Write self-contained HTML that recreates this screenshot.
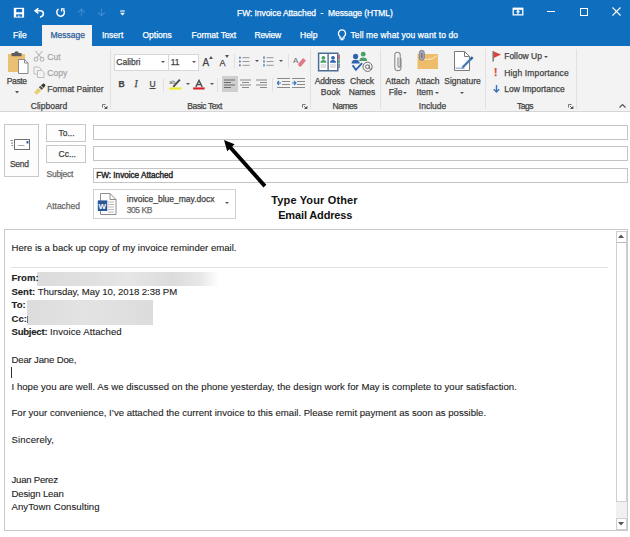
<!DOCTYPE html>
<html><head><meta charset="utf-8">
<style>
html,body{margin:0;padding:0;}
body{width:630px;height:537px;overflow:hidden;position:relative;background:#fff;font-family:"Liberation Sans",sans-serif;}
.a{position:absolute;}
.t{position:absolute;z-index:2;white-space:nowrap;line-height:1;-webkit-text-stroke:0.25px currentColor;}
#top{left:0;top:0;width:630px;height:46px;background:#106ebe;}
#rib{left:0;top:46px;width:630px;height:65px;background:#f3f3f3;border-bottom:1px solid #d6d6d6;}
.w{color:#fff;font-size:8.5px;}
.r{color:#444;font-size:8.5px;}
.sep{position:absolute;width:1px;background:#e1e1e1;}
.box{position:absolute;border:1px solid #c8c8c8;background:#fff;box-sizing:border-box;}
.btn{position:absolute;border:1px solid #c8c8c8;background:#fdfdfd;box-sizing:border-box;}
.b{color:#222;font-size:9.6px;-webkit-text-stroke:0.1px #222;}
</style></head><body>
<!-- title bar + tabs -->
<div id="top" class="a"></div>
<!-- QAT -->
<svg class="a" style="left:13px;top:7px" width="12" height="12" viewBox="0 0 12 12"><rect x="0.8" y="0.8" width="10.3" height="9.8" fill="#fff"/><rect x="3.2" y="1.9" width="5.9" height="3.4" rx="0.6" fill="#106ebe"/><rect x="3.2" y="7.3" width="5.9" height="2.4" fill="#106ebe"/><rect x="5" y="8.5" width="1.5" height="1.3" fill="#fff"/></svg>
<svg class="a" style="left:33px;top:6px" width="13" height="12" viewBox="0 0 13 12"><path d="M5.4 2.3L2.2 4.8l3.2 2.6" fill="none" stroke="#fff" stroke-width="1.6"/><path d="M2.4 4.8h5.2a2.9 2.9 0 0 1 0.9 5.6l-1.4 0.8" fill="none" stroke="#fff" stroke-width="1.6"/></svg>
<svg class="a" style="left:54px;top:7px" width="13" height="12" viewBox="0 0 13 12"><path d="M4.5 2.2A3.8 3.8 0 1 0 9.4 2.8" fill="none" stroke="#fff" stroke-width="1.5"/><path d="M10.6 1.9H7.6V4.6" fill="none" stroke="#fff" stroke-width="1.4"/></svg>
<svg class="a" style="left:77px;top:8px" width="9" height="9" viewBox="0 0 9 9"><path d="M4.5 8.5V1.2M1.3 4.5l3.2-3.3 3.2 3.3" fill="none" stroke="#3f88cf" stroke-width="1.15"/></svg>
<svg class="a" style="left:97px;top:8px" width="9" height="9" viewBox="0 0 9 9"><path d="M4.5 0.5V7.8M1.3 4.5l3.2 3.3 3.2-3.3" fill="none" stroke="#3f88cf" stroke-width="1.15"/></svg>
<svg class="a" style="left:119.5px;top:9.5px" width="5" height="6" viewBox="0 0 5 6"><path d="M0.2 1h4.6" stroke="#fff" stroke-width="1.1"/><path d="M0.1 2.8h4.8L2.5 5.6z" fill="#fff"/></svg>
<div class="t w" style="left:237px;top:8.6px;letter-spacing:-0.06px">FW: Invoice Attached&nbsp; -&nbsp; Message (HTML)</div>
<!-- window controls -->
<svg class="a" style="left:512px;top:7px" width="12" height="9" viewBox="0 0 12 9"><path d="M1.2 1.5h9.6v6.3H1.2z" fill="none" stroke="#fff" stroke-width="1.3"/><rect x="1" y="0.8" width="10" height="2" fill="#fff"/><path d="M6 2.6L3.8 5.2h4.4z" fill="#fff"/><rect x="5.4" y="5" width="1.2" height="2.5" fill="#fff"/></svg>
<div class="a" style="left:547px;top:11px;width:8px;height:1px;background:#fff"></div>
<div class="a" style="left:580px;top:8px;width:6px;height:6px;border:1.2px solid #fff"></div>
<svg class="a" style="left:612px;top:7px" width="9" height="9" viewBox="0 0 9 9"><path d="M0.5 0.5l8 8M8.5 0.5l-8 8" stroke="#fff" stroke-width="1.1"/></svg>
<!-- tabs -->
<div class="a" style="left:42px;top:25px;width:50px;height:21px;background:#f3f3f3"></div>
<div class="t w" style="left:13px;top:31.1px;">File</div>
<div class="t" style="left:50.5px;top:31.1px;font-size:8.5px;color:#2a5d9a">Message</div>
<div class="t w" style="left:102px;top:31.1px;">Insert</div>
<div class="t w" style="left:142.5px;top:31.1px;">Options</div>
<div class="t w" style="left:191.5px;top:31.1px;">Format Text</div>
<div class="t w" style="left:254.5px;top:31.1px;letter-spacing:-0.25px">Review</div>
<div class="t w" style="left:300px;top:31.1px;">Help</div>
<svg class="a" style="left:337px;top:29px" width="10" height="12" viewBox="0 0 10 12"><path d="M5 1a3.5 3.5 0 0 0-2 6.4V9h4V7.4A3.5 3.5 0 0 0 5 1zM3.5 10.5h3" fill="none" stroke="#fff" stroke-width="1.25"/></svg>
<div class="t w" style="left:350.5px;top:31.1px;letter-spacing:0.1px">Tell me what you want to do</div>

<!-- ribbon -->
<div id="rib" class="a"></div>
<!-- ===== Clipboard group ===== -->
<svg class="a" style="left:7px;top:50px" width="23" height="25" viewBox="0 0 23 25">
 <rect x="1" y="4" width="17" height="18" fill="#eac073"/>
 <path d="M4.5 3h10v3.2h-10z" fill="#5c5c5c"/><path d="M7.3 3a2.2 1.8 0 0 1 4.4 0z" fill="#5c5c5c"/>
 <path d="M11.5 9.5h6.2l3.3 3.3v10.7h-9.5z" fill="#fff" stroke="#8a8a8a" stroke-width="1"/>
 <path d="M17.5 9.5v3.5h3.5" fill="none" stroke="#8a8a8a" stroke-width="1"/>
</svg>
<div class="t r" style="left:6.7px;top:76.9px;letter-spacing:-0.35px">Paste</div>
<svg class="a" style="left:14.5px;top:91px" width="4" height="2.5" viewBox="0 0 4 2.5"><path d="M0 0h4L2 2.5z" fill="#555"/></svg>
<svg class="a" style="left:33px;top:50px" width="12" height="12" viewBox="0 0 12 12"><path d="M2.5 1l6 7M9.5 1l-6 7" stroke="#b5b5b5" stroke-width="1.1" fill="none"/><circle cx="3" cy="9.3" r="1.9" fill="none" stroke="#b5b5b5" stroke-width="1.1"/><circle cx="9" cy="9.3" r="1.9" fill="none" stroke="#b5b5b5" stroke-width="1.1"/></svg>
<div class="t r" style="left:47.3px;top:53.2px;color:#a8a8a8">Cut</div>
<svg class="a" style="left:33px;top:66px" width="12" height="12" viewBox="0 0 12 12"><path d="M1 1h5l2 2v5H1z" fill="none" stroke="#bdbdbd" stroke-width="1"/><path d="M4.5 4.5h4.5l2 2v5H4.5z" fill="#f3f3f3" stroke="#bdbdbd" stroke-width="1"/></svg>
<div class="t r" style="left:47.3px;top:68.8px;color:#a8a8a8">Copy</div>
<svg class="a" style="left:33px;top:83px" width="13" height="12" viewBox="0 0 13 12"><path d="M1 9.5l4.2-4.6 3 2.8-4.4 4z" fill="#e3cf72"/><path d="M5.8 4.3l1.6-1.5 2.8 2.6-1.5 1.6z" fill="#555"/><path d="M8 2.3l2.6-2 2 2-2 2.6z" fill="#333"/></svg>
<div class="t r" style="left:47.3px;top:85.3px;">Format Painter</div>
<div class="t r" style="left:30.8px;top:101.7px;">Clipboard</div>
<svg class="a" style="left:102px;top:104px" width="6" height="5" viewBox="0 0 6 5"><path d="M0.5 0.5h3M0.5 0.5v3" stroke="#777" stroke-width="1" fill="none"/><path d="M2 2l3 3M5 2.5V5H2.5z" stroke="#555" fill="#555" stroke-width="0.8"/></svg>
<div class="sep" style="left:110px;top:49px;height:60px"></div>

<!-- ===== Basic Text group ===== -->
<div class="box" style="left:114px;top:54px;width:55px;height:17px;border-color:#d8d8d8"></div>
<div class="box" style="left:168px;top:54px;width:31px;height:17px;border-color:#d8d8d8"></div>
<div class="t r" style="left:116.3px;top:58px;">Calibri</div>
<div class="t r" style="left:170.7px;top:58px;">11</div>
<svg class="a" style="left:161px;top:61px" width="4" height="2" viewBox="0 0 4 2"><path d="M0 0h4L2 2z" fill="#555"/></svg>
<svg class="a" style="left:192px;top:61px" width="4" height="2" viewBox="0 0 4 2"><path d="M0 0h4L2 2z" fill="#555"/></svg>
<div class="t" style="left:202.5px;top:57.5px;font-size:10px;color:#444">A</div>
<svg class="a" style="left:209px;top:56px" width="4" height="3" viewBox="0 0 4 3"><path d="M0 3h4L2 0z" fill="#555"/></svg>
<div class="t" style="left:219.5px;top:58.5px;font-size:9px;color:#444">A</div>
<svg class="a" style="left:225px;top:55px" width="4" height="3" viewBox="0 0 4 3"><path d="M0 0h4L2 3z" fill="#555"/></svg>
<div class="sep" style="left:234px;top:54px;height:14px;background:#e0e0e0"></div>
<svg class="a" style="left:239px;top:56px" width="11" height="11" viewBox="0 0 11 11"><g fill="#5a7fae"><rect x="0" y="0.8" width="1.8" height="1.8"/><rect x="0" y="4.6" width="1.8" height="1.8"/><rect x="0" y="8.4" width="1.8" height="1.8"/></g><g stroke="#8c8c8c" stroke-width="0.9"><path d="M3.5 1.7h7M3.5 5.5h7M3.5 9.3h7"/></g></svg>
<svg class="a" style="left:255px;top:60px" width="4" height="2" viewBox="0 0 4 2"><path d="M0 0h4L2 2z" fill="#555"/></svg>
<svg class="a" style="left:263px;top:56px" width="11" height="11" viewBox="0 0 11 11"><g fill="#5a7fae"><rect x="0.3" y="0.3" width="1.4" height="2.6"/><rect x="0.3" y="4.1" width="1.4" height="2.6"/><rect x="0.3" y="7.9" width="1.4" height="2.6"/></g><g stroke="#8c8c8c" stroke-width="0.9"><path d="M3.5 1.7h7M3.5 5.5h7M3.5 9.3h7"/></g></svg>
<svg class="a" style="left:279px;top:60px" width="4" height="2" viewBox="0 0 4 2"><path d="M0 0h4L2 2z" fill="#555"/></svg>
<div class="sep" style="left:288px;top:54px;height:14px;background:#e0e0e0"></div>
<svg class="a" style="left:293px;top:55px" width="13" height="12" viewBox="0 0 13 12"><text x="0" y="8" font-size="8" font-family="Liberation Sans" fill="#666">A</text><path d="M5 9l5-6 3 2.5-5 6H6z" fill="#e07a8a"/></svg>
<div class="t" style="left:118.5px;top:79.6px;font-size:8.5px;font-weight:bold;color:#444">B</div>
<div class="t" style="left:134.5px;top:79.6px;font-size:9.5px;font-style:italic;font-family:'Liberation Serif';color:#444">I</div>
<div class="t" style="left:149.5px;top:79.6px;font-size:8.5px;color:#444;text-decoration:underline">U</div>
<div class="sep" style="left:163px;top:78px;height:14px;background:#e0e0e0"></div>
<svg class="a" style="left:168px;top:78px" width="15" height="12" viewBox="0 0 15 12"><text x="1.2" y="5.6" font-size="5.5" font-family="Liberation Sans" fill="#555">ab</text><path d="M4.5 8.2l6.6-7.2 1.5 1.3-6.6 7.2z" fill="#505050"/><rect x="1.2" y="9.4" width="12" height="2.2" fill="#eee82a"/></svg>
<svg class="a" style="left:186px;top:83px" width="4" height="2" viewBox="0 0 4 2"><path d="M0 0h4L2 2z" fill="#555"/></svg>
<svg class="a" style="left:193px;top:79px" width="12" height="11" viewBox="0 0 12 11"><path d="M2.8 8L6 1.4 9.2 8M4 5.6h4" fill="none" stroke="#4a4a4a" stroke-width="1.4"/><rect x="0.2" y="8.4" width="11.4" height="2.1" fill="#d9202a"/></svg>
<svg class="a" style="left:210px;top:83px" width="4" height="2" viewBox="0 0 4 2"><path d="M0 0h4L2 2z" fill="#555"/></svg>
<div class="sep" style="left:217px;top:78px;height:14px;background:#e0e0e0"></div>
<div class="a" style="left:222px;top:76px;width:16px;height:16px;background:#cfcfcf"></div>
<svg class="a" style="left:224px;top:79px" width="11" height="10" viewBox="0 0 11 10"><path d="M0 1h11M0 3.5h7M0 6h11M0 8.5h7" stroke="#6a6a6a" stroke-width="1"/></svg>
<svg class="a" style="left:240px;top:79px" width="11" height="10" viewBox="0 0 11 10"><path d="M0 1h11M2 3.5h7M0 6h11M2 8.5h7" stroke="#8a8a8a" stroke-width="1"/></svg>
<svg class="a" style="left:256px;top:79px" width="11" height="10" viewBox="0 0 11 10"><path d="M0 1h11M4 3.5h7M0 6h11M4 8.5h7" stroke="#8a8a8a" stroke-width="1"/></svg>
<div class="sep" style="left:272px;top:78px;height:14px;background:#e0e0e0"></div>
<svg class="a" style="left:277px;top:78px" width="13" height="11" viewBox="0 0 13 11"><path d="M0 0.5h13M5 3.5h8M5 6.5h8M0 9.5h13" stroke="#8a8a8a" stroke-width="1"/><path d="M0 5h4M2 3l-2 2 2 2" stroke="#3a77c0" stroke-width="1.2" fill="none"/></svg>
<svg class="a" style="left:292px;top:78px" width="13" height="11" viewBox="0 0 13 11"><path d="M0 0.5h13M5 3.5h8M5 6.5h8M0 9.5h13" stroke="#8a8a8a" stroke-width="1"/><path d="M0 5h4M2 3l2 2-2 2" stroke="#3a77c0" stroke-width="1.2" fill="none"/></svg>
<div class="t r" style="left:187.3px;top:101.7px;letter-spacing:-0.4px">Basic Text</div>
<svg class="a" style="left:302px;top:104px" width="6" height="5" viewBox="0 0 6 5"><path d="M0.5 0.5h3M0.5 0.5v3" stroke="#777" stroke-width="1" fill="none"/><path d="M2 2l3 3M5 2.5V5H2.5z" stroke="#555" fill="#555" stroke-width="0.8"/></svg>
<div class="sep" style="left:310px;top:49px;height:60px"></div>

<!-- ===== Names group ===== -->
<svg class="a" style="left:317px;top:52px" width="24" height="20" viewBox="0 0 24 20">
 <path d="M1.6 1.2h9.6v17.6H1.6zM11.2 1.2h9.6v17.6h-9.6z" fill="#fff" stroke="#4d6c94" stroke-width="1.5"/>
 <path d="M11.2 1.5v17" stroke="#8aa0c0" stroke-width="0.8"/>
 <rect x="21.3" y="2.5" width="1.6" height="4.5" fill="#c85a5a"/><rect x="21.3" y="7.5" width="1.6" height="4" fill="#5aa07a"/><rect x="21.3" y="12" width="1.6" height="4" fill="#7a8aa0"/>
 <circle cx="6.4" cy="5.8" r="1.9" fill="#4a9e6c"/><path d="M3.4 10.8a3 2.8 0 0 1 6 0z" fill="#4a9e6c"/>
 <circle cx="16" cy="5.8" r="1.9" fill="#2f64ae"/><path d="M13 10.8a3 2.8 0 0 1 6 0z" fill="#2f64ae"/>
 <path d="M3.6 13h5.6M3.6 15h5.6M13.2 13h5.6M13.2 15h5.6" stroke="#b0b0b0" stroke-width="0.8"/>
</svg>
<svg class="a" style="left:351px;top:51px" width="24" height="22" viewBox="0 0 24 22">
 <circle cx="12.2" cy="3.2" r="2.4" fill="#4a9e6c"/><path d="M8.3 10a3.9 3.4 0 0 1 7.8 0z" fill="#4a9e6c"/>
 <circle cx="4.6" cy="5.4" r="2.6" fill="#2f64ae"/><path d="M0.5 12.5a4.1 3.8 0 0 1 8.2 0z" fill="#2f64ae"/>
 <path d="M1.6 14.2l3.3 4.6 6.2-6.6" stroke="#2f64ae" stroke-width="1.9" fill="none"/>
 <circle cx="16.6" cy="15.8" r="5.3" fill="#f3f3f3"/>
 <circle cx="16.6" cy="15.8" r="4.6" fill="none" stroke="#6e6e6e" stroke-width="1"/>
 <circle cx="16.4" cy="15.8" r="1.9" fill="none" stroke="#6e6e6e" stroke-width="1"/>
 <path d="M18.3 13.6v3.4a1.1 1.1 0 0 0 2.2 0" fill="none" stroke="#6e6e6e" stroke-width="0.9"/>
</svg>
<div class="t r" style="left:314.8px;top:77.3px;letter-spacing:-0.2px">Address</div>
<div class="t r" style="left:320.8px;top:88px;">Book</div>
<div class="t r" style="left:350px;top:77.3px;">Check</div>
<div class="t r" style="left:348.7px;top:88px;letter-spacing:-0.1px">Names</div>
<div class="t r" style="left:332.6px;top:101.7px;letter-spacing:-0.5px">Names</div>
<div class="sep" style="left:380px;top:49px;height:60px"></div>

<!-- ===== Include group ===== -->
<svg class="a" style="left:393px;top:51px" width="10" height="21" viewBox="0 0 10 21"><path d="M5 6.5V15a1.1 1.1 0 0 0 2.2 0V4a2.7 2.7 0 0 0-5.4 0V16.5a3.1 3.1 0 0 0 6.2 0V7" fill="none" stroke="#8a8a8a" stroke-width="1.1"/></svg>
<svg class="a" style="left:417px;top:49px" width="22" height="21" viewBox="0 0 22 21"><rect x="0.5" y="5" width="20.5" height="15" fill="#eebd6c"/><path d="M2 6.5q8.5 8 18 0" fill="none" stroke="#f8e0b0" stroke-width="1.1"/><rect x="2.3" y="1.3" width="5" height="10" rx="2.5" fill="#a8a8b8" stroke="#7a7a88" stroke-width="0.9"/><path d="M4.8 4v5" stroke="#555" stroke-width="0.9"/></svg>
<svg class="a" style="left:452px;top:50px" width="22" height="22" viewBox="0 0 22 22"><path d="M2.5 1.5h10l5 5v14h-15z" fill="#fff" stroke="#7a7a7a" stroke-width="1"/><path d="M12.5 1.5v5h5" fill="none" stroke="#7a7a7a" stroke-width="1"/><path d="M10.5 17.5l9.2-9.4" stroke="#4a78b2" stroke-width="2.4"/><path d="M19 8.8l1.6-1.6" stroke="#2f5d96" stroke-width="2.4"/><path d="M9.8 18.3l0.8-0.8" stroke="#9ab" stroke-width="1.4"/><path d="M3.5 18.2h9" stroke="#5a7fae" stroke-width="0.8"/></svg>
<div class="t r" style="left:385.6px;top:77px;">Attach</div>
<div class="t r" style="left:388.7px;top:88.3px;">File</div>
<svg class="a" style="left:403px;top:92px" width="4" height="2" viewBox="0 0 4 2"><path d="M0 0h4L2 2z" fill="#555"/></svg>
<div class="t r" style="left:415.5px;top:77px;">Attach</div>
<div class="t r" style="left:416.6px;top:88.3px;">Item</div>
<svg class="a" style="left:435px;top:92px" width="4" height="2" viewBox="0 0 4 2"><path d="M0 0h4L2 2z" fill="#555"/></svg>
<div class="t r" style="left:444.3px;top:77px;">Signature</div>
<svg class="a" style="left:460px;top:92px" width="4" height="2" viewBox="0 0 4 2"><path d="M0 0h4L2 2z" fill="#555"/></svg>
<div class="t r" style="left:418.8px;top:101.7px;">Include</div>
<div class="sep" style="left:485px;top:49px;height:60px"></div>

<!-- ===== Tags group ===== -->
<svg class="a" style="left:492px;top:51px" width="10" height="11" viewBox="0 0 10 11"><rect x="0.5" y="0" width="1.3" height="10.5" fill="#666"/><path d="M1.8 0.5L9 3.5 1.8 7z" fill="#d9443a"/></svg>
<div class="t r" style="left:504.2px;top:52.2px;">Follow Up</div>
<svg class="a" style="left:544px;top:56px" width="4" height="2" viewBox="0 0 4 2"><path d="M0 0h4L2 2z" fill="#555"/></svg>
<div class="t" style="left:494px;top:67.5px;font-size:10px;font-weight:bold;color:#d9443a">!</div>
<div class="t r" style="left:504.2px;top:68.6px;letter-spacing:0.15px">High Importance</div>
<svg class="a" style="left:493px;top:85px" width="7" height="8" viewBox="0 0 7 8"><path d="M3.5 0v7M0.8 4.2l2.7 2.8 2.7-2.8" fill="none" stroke="#3b73b9" stroke-width="1.4"/></svg>
<div class="t r" style="left:504.2px;top:85.1px;">Low Importance</div>
<div class="t r" style="left:517px;top:101.7px;letter-spacing:-0.45px">Tags</div>
<svg class="a" style="left:568px;top:104px" width="6" height="5" viewBox="0 0 6 5"><path d="M0.5 0.5h3M0.5 0.5v3" stroke="#777" stroke-width="1" fill="none"/><path d="M2 2l3 3M5 2.5V5H2.5z" stroke="#555" fill="#555" stroke-width="0.8"/></svg>
<div class="sep" style="left:576px;top:49px;height:60px"></div>
<svg class="a" style="left:619px;top:103px" width="7" height="5" viewBox="0 0 7 5"><path d="M0.5 4.5l3-3 3 3" fill="none" stroke="#555" stroke-width="1.2"/></svg>


<!-- ===== Compose header ===== -->
<div class="btn" style="left:4px;top:124px;width:35px;height:53px;"></div>
<svg class="a" style="left:10px;top:138px" width="21" height="13" viewBox="0 0 21 13"><path d="M0.5 2.5h2.5M1 5h2M1.5 7.5h1.5" stroke="#777" stroke-width="0.9"/><rect x="4.5" y="1.5" width="15" height="10" fill="#fff" stroke="#6f6f6f" stroke-width="1"/><rect x="16.5" y="3" width="2" height="2.5" fill="#2e66b3"/><path d="M7.5 7.5h7" stroke="#aaa" stroke-width="1"/></svg>
<div class="t" style="left:10px;top:159.6px;font-size:8.5px;color:#444;letter-spacing:-0.3px">Send</div>
<div class="btn" style="left:46px;top:124px;width:40px;height:18px;"></div>
<div class="btn" style="left:46px;top:145px;width:40px;height:18px;"></div>
<div class="t" style="left:58.5px;top:129.4px;font-size:8.5px;color:#444">To...</div>
<div class="t" style="left:58.5px;top:150.3px;font-size:8.5px;color:#444">Cc...</div>
<div class="t" style="left:46.5px;top:170.2px;font-size:8.5px;color:#6a6a6a;letter-spacing:-0.25px">Subject</div>
<div class="t" style="left:46.5px;top:201.9px;font-size:8.5px;color:#6a6a6a">Attached</div>
<div class="box" style="left:93px;top:125px;width:535px;height:15px;border-color:#c4c4c4"></div>
<div class="box" style="left:93px;top:146px;width:535px;height:15px;border-color:#c4c4c4"></div>
<div class="box" style="left:93px;top:168px;width:535px;height:15px;border-color:#c4c4c4"></div>
<div class="t" style="left:96.3px;top:171.6px;font-size:8.2px;color:#262626;letter-spacing:-0.02px;-webkit-text-stroke:0.4px #262626">FW: Invoice Attached</div>
<div class="box" style="left:93px;top:189px;width:143px;height:30px;border-color:#d0d0d0"></div>
<svg class="a" style="left:97px;top:192px" width="21" height="24" viewBox="0 0 21 24"><path d="M3.5 1.5h9.5l6 6v15h-15.5z" fill="#fff" stroke="#8e8e8e" stroke-width="1"/><path d="M13 1.5v6h6" fill="none" stroke="#8e8e8e"/><path d="M10.5 10h6.5M10.5 12.5h6.5M10.5 15h6.5M10.5 17.5h6.5M10.5 20h6.5" stroke="#b5b5b5" stroke-width="0.9"/><rect x="0.8" y="8.4" width="9.4" height="10.6" fill="#2b579a"/><text x="1.5" y="16.6" font-size="8" font-weight="bold" font-family="Liberation Sans" fill="#fff">W</text></svg>
<div class="t" style="left:126.8px;top:194.6px;font-size:8.5px;color:#444">invoice_blue_may.docx</div>
<div class="t" style="left:126.8px;top:205.6px;font-size:8.5px;color:#6a6a6a;letter-spacing:-0.45px">305 KB</div>
<svg class="a" style="left:225px;top:202px" width="4" height="2" viewBox="0 0 4 2"><path d="M0 0h4L2 2z" fill="#555"/></svg>

<!-- arrow + annotation -->
<svg class="a" style="left:215px;top:132px" width="60" height="60" viewBox="215 132 60 60"><path d="M229.5 146.5L264.9 186.1" stroke="#000" stroke-width="3.9" stroke-linecap="butt"/><path d="M224 140L234.6 144.2L227.2 151.2z" fill="#000"/></svg>
<div class="t" style="left:271.2px;top:194.7px;font-size:11px;font-weight:bold;color:#111;letter-spacing:0.15px;-webkit-text-stroke:0">Type Your Other</div>
<div class="t" style="left:278.2px;top:210.2px;font-size:11px;font-weight:bold;color:#111;letter-spacing:-0.15px;-webkit-text-stroke:0">Email Address</div>

<!-- ===== Body ===== -->
<div class="a" style="left:4px;top:229px;width:622px;height:300px;border:1px solid #c9c9c9;background:#fff"></div>
<!-- scrollbar -->
<div class="a" style="left:616px;top:231px;width:11px;height:298px;background:#f0f0f0"></div>
<div class="a" style="left:616px;top:231px;width:9px;height:10px;border:1px solid #d0d0d0;background:#fff"></div>
<svg class="a" style="left:618px;top:234px" width="6" height="4" viewBox="0 0 6 4"><path d="M0 4h6L3 0.5z" fill="#555"/></svg>
<div class="a" style="left:616px;top:242px;width:9px;height:258px;border:1px solid #cfcfcf;border-top-color:#bbb;background:#fff"></div>
<div class="a" style="left:616px;top:518px;width:9px;height:10px;border:1px solid #d0d0d0;background:#fff"></div>
<svg class="a" style="left:618px;top:522px" width="6" height="4" viewBox="0 0 6 4"><path d="M0 0h6L3 3.5z" fill="#555"/></svg>

<div class="t b" style="left:11.5px;top:242.9px;">Here is a back up copy of my invoice reminder email.</div>
<div class="a" style="left:11px;top:267px;width:597px;height:1px;background:#e3e3e3"></div>
<div class="t b" style="left:11.5px;top:273.3px;"><b>From:</b></div>
<div class="a" style="left:37px;top:272px;width:182px;height:14px;background:linear-gradient(90deg,#dcdcdc 0%,#e0e0e0 30%,#e6e6e6 50%,#dcdcdc 75%,#e8e8e8 90%,#fff 100%);filter:blur(0.6px)"></div>
<div class="t b" style="left:11.5px;top:286.9px;letter-spacing:-0.055px"><b>Sent:</b> Thursday, May 10, 2018 2:38 PM</div>
<div class="t b" style="left:11.5px;top:300.1px;"><b>To:</b></div>
<div class="t b" style="left:11.5px;top:313.5px;"><b>Cc:</b></div>
<div class="a" style="left:27px;top:300px;width:126px;height:25px;background:linear-gradient(90deg,#dcdcdc 0%,#e3e3e3 45%,#e0e0e0 70%,#dcdcdc 100%);filter:blur(0.6px)"></div><div class="a" style="left:27px;top:316px;width:1px;height:7px;background:#777"></div>
<div class="t b" style="left:11.5px;top:327.1px;"><b style="letter-spacing:-0.25px">Subject:</b> <span style="letter-spacing:0.08px">Invoice Attached</span></div>
<div class="t b" style="left:11.5px;top:354.9px;letter-spacing:-0.18px">Dear Jane Doe,</div>
<div class="a" style="left:11px;top:367px;width:1px;height:11px;background:#333"></div>
<div class="t b" style="left:11.5px;top:381.6px;letter-spacing:0.023px">I hope you are well. As we discussed on the phone yesterday, the design work for May is complete to your satisfaction.</div>
<div class="t b" style="left:11.5px;top:407.6px;">For your convenience, I’ve attached the current invoice to this email. Please remit payment as soon as possible.</div>
<div class="t b" style="left:11.5px;top:435.3px;letter-spacing:0.12px">Sincerely,</div>
<div class="t b" style="left:11.5px;top:475.4px;letter-spacing:-0.23px">Juan Perez</div>
<div class="t b" style="left:11.5px;top:488.7px;letter-spacing:-0.16px">Design Lean</div>
<div class="t b" style="left:11.5px;top:501.9px;letter-spacing:0.07px">AnyTown Consulting</div>
</body></html>
